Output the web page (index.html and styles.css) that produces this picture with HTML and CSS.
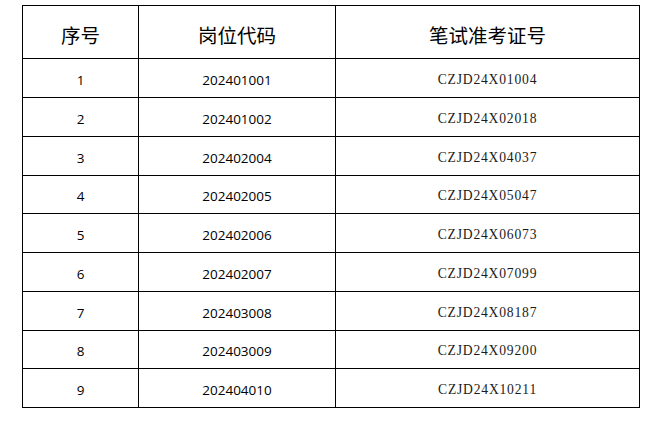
FILE: index.html
```html
<!DOCTYPE html>
<html lang="zh">
<head>
<meta charset="utf-8">
<link rel="stylesheet" href="styles.css">
</head>
<body>
<div class="page">
<table class="grid">
<colgroup><col class="c1"><col class="c2"><col class="c3"></colgroup>
<thead>
<tr><th>序号</th><th>岗位代码</th><th>笔试准考证号</th></tr>
</thead>
<tbody>
<tr><td class="num">1</td><td class="code">202401001</td><td class="ticket">CZJD24X01004</td></tr>
<tr><td class="num">2</td><td class="code">202401002</td><td class="ticket">CZJD24X02018</td></tr>
<tr><td class="num">3</td><td class="code">202402004</td><td class="ticket">CZJD24X04037</td></tr>
<tr><td class="num">4</td><td class="code">202402005</td><td class="ticket">CZJD24X05047</td></tr>
<tr><td class="num">5</td><td class="code">202402006</td><td class="ticket">CZJD24X06073</td></tr>
<tr><td class="num">6</td><td class="code">202402007</td><td class="ticket">CZJD24X07099</td></tr>
<tr><td class="num">7</td><td class="code">202403008</td><td class="ticket">CZJD24X08187</td></tr>
<tr><td class="num">8</td><td class="code">202403009</td><td class="ticket">CZJD24X09200</td></tr>
<tr><td class="num">9</td><td class="code">202404010</td><td class="ticket">CZJD24X10211</td></tr>
</tbody>
</table>
</div>
</body>
</html>
```
FILE: styles.css
```css
html, body {
  margin: 0;
  padding: 0;
  background: #fff;
}
.page {
  padding: 5px 0 0 22px;
}
.grid {
  border-collapse: collapse;
  table-layout: fixed;
  width: 617px;
  color: #000;
}
.c1 { width: 116px; }
.c2 { width: 197px; }
.c3 { width: 304px; }
.grid th, .grid td {
  border: 1px solid #000;
  padding: 0;
  text-align: center;
  vertical-align: middle;
}
.grid th {
  height: 53px;
  font-family: "Noto Sans CJK SC", sans-serif;
  font-weight: 400;
  font-size: 19.5px;
  padding-top: 4px;
  box-sizing: border-box;
}
.grid td {
  height: 39px;
  padding-top: 3px;
  box-sizing: border-box;
}
.grid tbody tr:nth-child(4) td,
.grid tbody tr:nth-child(8) td {
  height: 38px;
}
.num, .code {
  font-family: "Open Sans", sans-serif;
  font-size: 13.5px;
}
.ticket {
  font-family: "Liberation Serif", serif;
  font-size: 13.6px;
  letter-spacing: 0.8px;
  color: #1a1a1a;
}
```
